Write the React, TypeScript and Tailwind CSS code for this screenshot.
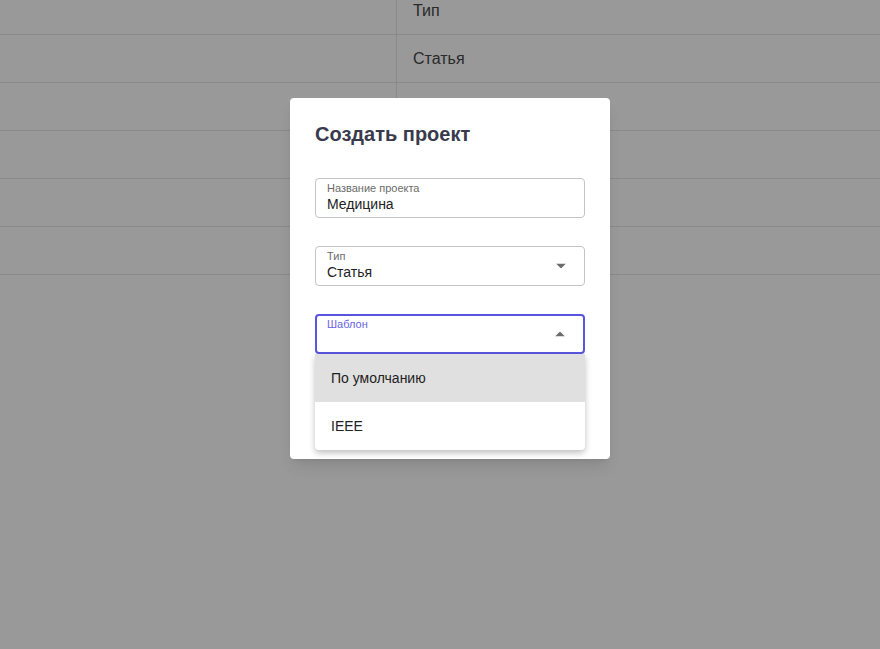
import React from "react";

const rows = ["Тип", "Статья", "", "", "", ""];

const Caret = ({ up }: { up?: boolean }) => (
  <svg width="10" height="5" viewBox="0 0 10 5" className="absolute right-[18px] top-1/2 -translate-y-1/2">
    <path d={up ? "M0 5 L5 0 L10 5 Z" : "M0 0 L5 5 L10 0 Z"} fill="#6b6b6b" />
  </svg>
);

const App = () => {
  return (
    <div className="relative h-[649px] w-[880px] overflow-hidden bg-white font-['Liberation_Sans',Arial,sans-serif]">
      {/* table behind the overlay */}
      <div className="-mt-[13px]">
        {rows.map((r, i) => (
          <div key={i} className="flex h-[48px] border-b border-[#e6e6e6]">
            <div className="w-[397px] border-r border-[#e6e6e6]" />
            <div className="flex flex-1 items-center pl-[16px] text-[16px] text-[#464646]">{r}</div>
          </div>
        ))}
      </div>

      <div className="absolute inset-0 bg-black/40" />

      <div className="absolute left-[290px] top-[98px] h-[361px] w-[320px] rounded-[4px] bg-white px-[25px] pt-[24px] shadow-lg">
        <h2 className="text-[20px] font-bold leading-[25px] text-[#393b4d]">Создать проект</h2>

        <div className="mt-[31px] h-[40px] rounded-[4px] border border-[#c4c4c4] pl-[11px] pt-[3px]">
          <div className="text-[11px] leading-[13px] text-[#6b6b6b]">Название проекта</div>
          <div className="text-[14px] leading-[18px] text-[#222]">Медицина</div>
        </div>

        <div className="relative mt-[28px] h-[40px] rounded-[4px] border border-[#c4c4c4] pl-[11px] pt-[3px]">
          <div className="text-[11px] leading-[13px] text-[#6b6b6b]">Тип</div>
          <div className="text-[14px] leading-[18px] text-[#222]">Статья</div>
          <Caret />
        </div>

        <div className="relative mt-[28px]">
          <div className="relative h-[40px] rounded-[4px] border-2 border-[#5a55e0] pl-[10px] pt-[2px]">
            <div className="text-[11px] leading-[13px] text-[#6a62e2]">Шаблон</div>
            <Caret up />
          </div>
          <div className="absolute left-0 right-0 top-[40px] z-10 overflow-hidden rounded-b-[4px] bg-white shadow-[0_3px_6px_rgba(0,0,0,0.25)]">
            <div className="flex h-[48px] items-center bg-[#e0e0e0] pl-[16px] text-[14px] text-[#222]">По умолчанию</div>
            <div className="flex h-[48px] items-center pl-[16px] text-[14px] text-[#222]">IEEE</div>
          </div>
        </div>
      </div>
    </div>
  );
};

export default App;
